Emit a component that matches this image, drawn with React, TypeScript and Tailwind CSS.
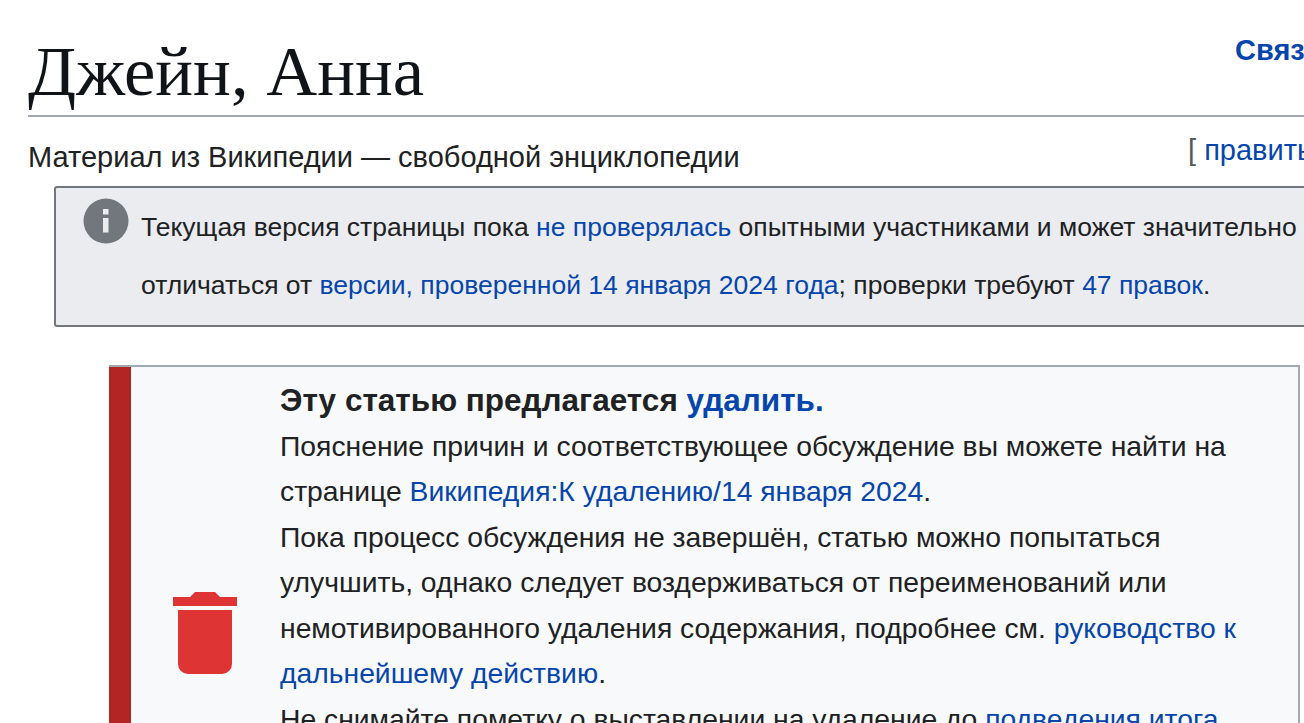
const sans = "font-['Liberation_Sans',Arial,sans-serif]";

function InfoIcon() {
  return (
    <svg width="46" height="46" viewBox="0 0 46 46" className="shrink-0">
      <circle cx="23" cy="23" r="22.5" fill="#72777d" />
      <rect x="20" y="11" width="5.5" height="5.5" fill="#eaecf0" />
      <rect x="20" y="20" width="5.5" height="14.5" fill="#eaecf0" />
    </svg>
  );
}

function TrashIcon() {
  return (
    <svg width="64" height="82" viewBox="0 0 64 82">
      <path d="M0 14V5h17l5-5h20l5 5h17v9z" fill="#df3434" />
      <path d="M5 18h54v54a10 10 0 0 1-10 10H15A10 10 0 0 1 5 72z" fill="#df3434" />
    </svg>
  );
}

function A({ children }: { children: React.ReactNode }) {
  return <a className="text-[#0645ad]">{children}</a>;
}

export default function App() {
  return (
    <div className={`w-[1304px] h-[723px] overflow-hidden bg-white text-[#202122] ${sans}`}>
      <div className="w-[1600px] pl-[28px]">
        {/* Title row */}
        <div className="w-[1276px] h-[117px] border-b-2 border-[#a2a9b1] flex items-start">
          <h1 className="w-[1207px] shrink-0 pt-[30px] font-['Liberation_Serif',serif] text-[70.6px] leading-[82px] text-[#101418]">
            Джейн, Анна
          </h1>
          <a className="pt-[31px] text-[29px] leading-[38px] font-bold text-[#0645ad] whitespace-nowrap">Связи</a>
        </div>

        {/* Subtitle row */}
        <div className="w-[1276px] h-[69px] flex items-start">
          <div className="w-[1160px] shrink-0 pt-[21px] text-[29px] leading-[38px] text-[#202122]">
            Материал из Википедии — свободной энциклопедии
          </div>
          <div className="pt-[14px] text-[29px] leading-[38px] whitespace-nowrap text-[#54595d]">
            [ <A>править</A>
          </div>
        </div>

        {/* Flagged revisions notice */}
        <div className="ml-[26px] w-[1400px] h-[141px] border-2 border-[#72777d] rounded-[3px] bg-[#eaecf0] flex items-start pl-[27px] pt-[10px] gap-[12px]">
          <InfoIcon />
          <div className="w-[1200px] text-[26.5px] leading-[58px] whitespace-nowrap">
            <div className="h-[58px]">
              Текущая версия страницы пока <A>не проверялась</A> опытными участниками и может значительно
            </div>
            <div>
              отличаться от <A>версии, проверенной 14 января 2024 года</A>; проверки требуют <A>47 правок</A>.
            </div>
          </div>
        </div>

        {/* Deletion notice */}
        <div className="ml-[81px] mt-[38px] w-[1191px] h-[420px] border-2 border-l-0 border-[#a2a9b1] bg-[#f8f9fa] flex">
          <div className="w-[22px] shrink-0 bg-[#b32424]" />
          <div className="w-[149px] shrink-0 flex justify-center pr-[2px] pt-[225px]">
            <div className="h-[82px]">
              <TrashIcon />
            </div>
          </div>
          <div className="w-[990px] pt-[11px] text-[28.3px] leading-[45.5px]">
            <div className="font-bold text-[31.5px]">
              Эту статью предлагается <A>удалить.</A>
            </div>
            <div>
              Пояснение причин и соответствующее обсуждение вы можете найти на странице{" "}
              <A>Википедия:К удалению/14 января 2024</A>.
            </div>
            <div>
              Пока процесс обсуждения не завершён, статью можно попытаться улучшить, однако следует воздерживаться от
              переименований или немотивированного удаления содержания, подробнее см.{" "}
              <A>руководство к дальнейшему действию</A>.
            </div>
            <div>
              Не снимайте пометку о выставлении на удаление до <A>подведения итога</A> обсуждения.
            </div>
          </div>
        </div>
      </div>
    </div>
  );
}
